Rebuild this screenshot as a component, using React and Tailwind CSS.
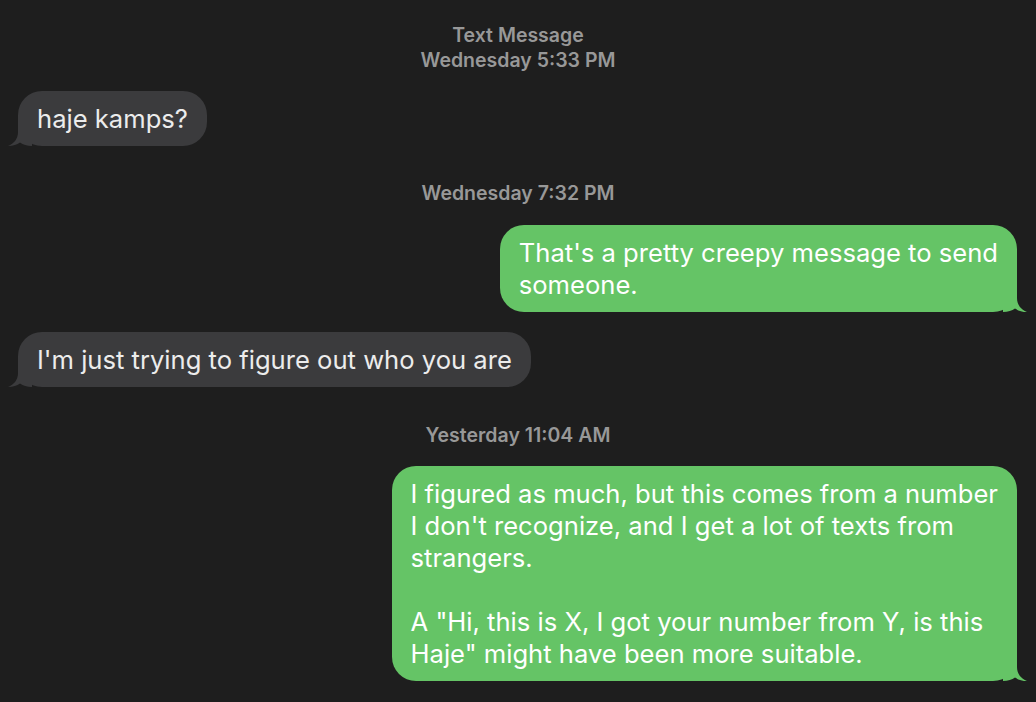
import React from 'react';

const Tail = ({ side, color }) => (
  <svg
    width="24"
    height="24"
    viewBox="0 0 24 24"
    className={
      side === 'left'
        ? 'absolute bottom-0 left-[-10px]'
        : 'absolute bottom-0 right-[-10px] -scale-x-100'
    }
  >
    <path d="M10 0 L10 10 C10 17 6 21.5 0 24 C5 24 9 22.5 12 20.5 C15 22.5 19 24 24 24 L24 0 Z" fill={color} />
  </svg>
);

const Stamp = ({ children, className = '' }) => (
  <div className={`text-center text-[19.5px] leading-[25px] font-semibold text-[#989898] ${className}`}>
    {children}
  </div>
);

const Received = ({ lines, className = '' }) => (
  <div className={`flex justify-start pl-[18px] ${className}`}>
    <div className="relative rounded-[24px] bg-[#3b3b3d] px-[19px] py-[11.5px] text-[25.6px] leading-[32px] text-[#ececec]">
      <Tail side="left" color="#3b3b3d" />
      <div className="relative">
        {lines.map((l, i) => (
          <div key={i} className="whitespace-nowrap">{l}</div>
        ))}
      </div>
    </div>
  </div>
);

const Sent = ({ lines, className = '' }) => (
  <div className={`flex justify-end pr-[19px] ${className}`}>
    <div className="relative rounded-[24px] bg-[#65c466] px-[19px] py-[11.5px] text-[25.6px] leading-[32px] text-white">
      <Tail side="right" color="#65c466" />
      <div className="relative">
        {lines.map((l, i) => (
          <div key={i} className="whitespace-nowrap min-h-[32px]">{l}</div>
        ))}
      </div>
    </div>
  </div>
);

export default function App() {
  return (
    <div
      className="w-[1036px] h-[702px] overflow-hidden bg-[#1e1e1e] pt-[23px]"
      style={{ fontFamily: 'Inter, "Noto Sans", sans-serif' }}
    >
      <Stamp>
        Text Message
        <br />
        Wednesday 5:33 PM
      </Stamp>
      <Received className="mt-[18px]" lines={['haje kamps?']} />
      <Stamp className="mt-[35px]">Wednesday 7:32 PM</Stamp>
      <Sent className="mt-[19px]" lines={["That's a pretty creepy message to send", 'someone.']} />
      <Received className="mt-[20px]" lines={["I'm just trying to figure out who you are"]} />
      <Stamp className="mt-[36px]">Yesterday 11:04 AM</Stamp>
      <Sent
        className="mt-[18px]"
        lines={[
          'I figured as much, but this comes from a number',
          "I don't recognize, and I get a lot of texts from",
          'strangers.',
          '',
          'A "Hi, this is X, I got your number from Y, is this',
          'Haje" might have been more suitable.',
        ]}
      />
    </div>
  );
}
